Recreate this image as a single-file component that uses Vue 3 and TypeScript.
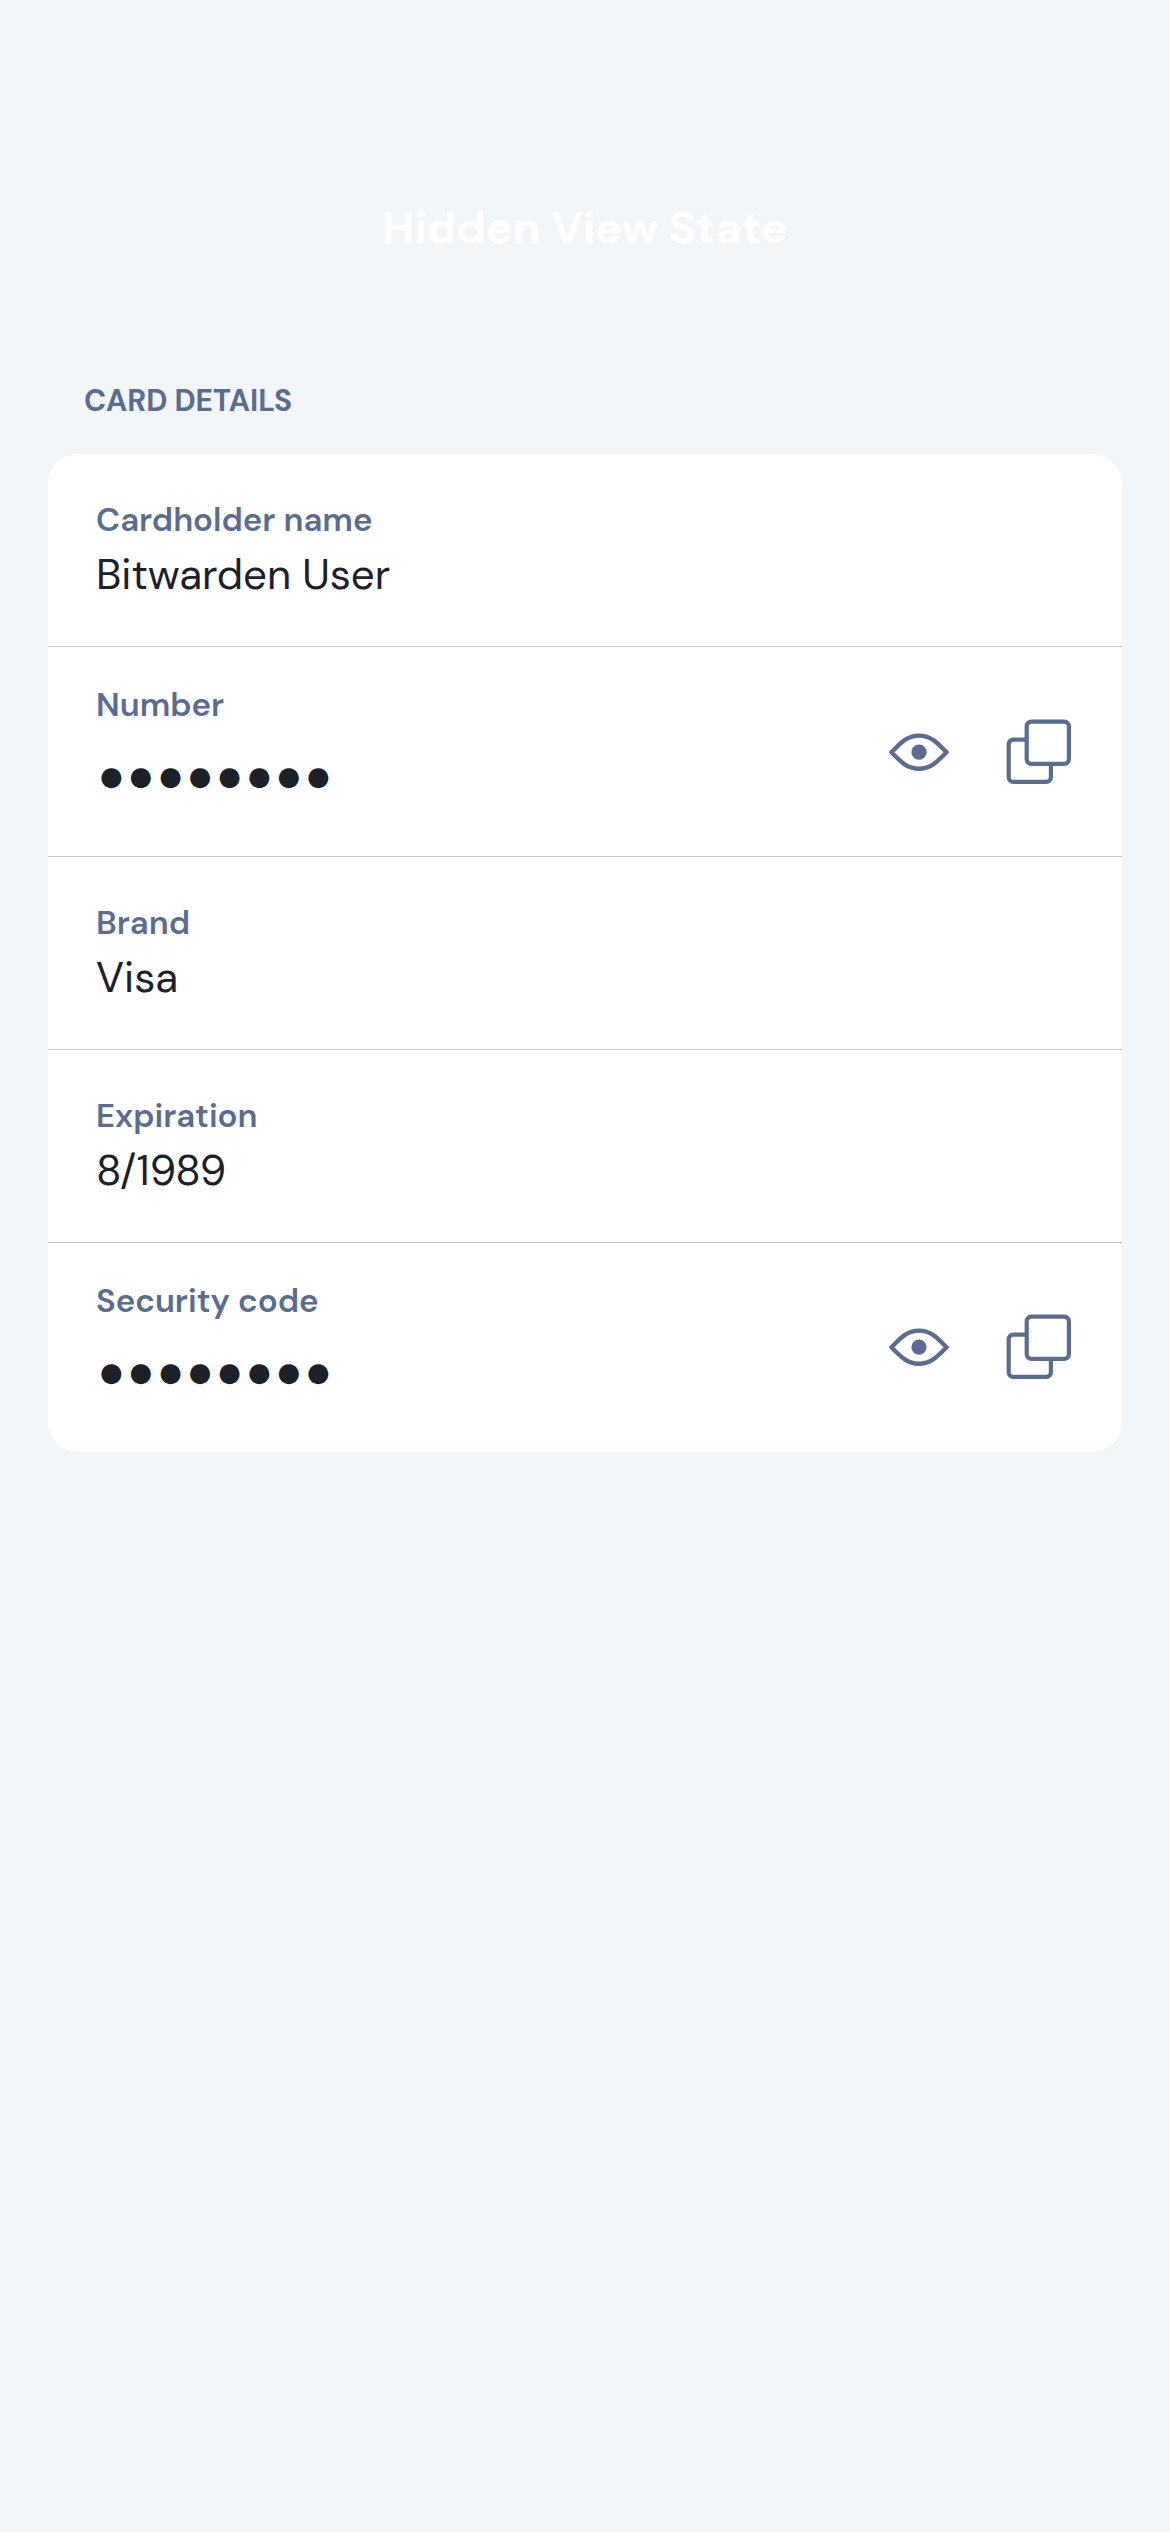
<script setup lang="ts">
interface Field {
  label: string
  value: string
  hidden?: boolean
}

const title = 'Hidden View State'
const fields: Field[] = [
  { label: 'Cardholder name', value: 'Bitwarden User' },
  { label: 'Number', value: '●●●●●●●●', hidden: true },
  { label: 'Brand', value: 'Visa' },
  { label: 'Expiration', value: '8/1989' },
  { label: 'Security code', value: '●●●●●●●●', hidden: true },
]
</script>

<template>
  <main class="screen">
    <h1 class="title">{{ title }}</h1>
    <h2 class="section">CARD DETAILS</h2>
    <section class="card">
      <div v-for="f in fields" :key="f.label" class="row" :class="{ secret: f.hidden }">
        <div class="text">
          <div class="label">{{ f.label }}</div>
          <div class="value">{{ f.value }}</div>
        </div>
        <div v-if="f.hidden" class="actions">
          <svg class="eye" width="60" height="38" viewBox="0 0 60 38" aria-label="Show">
            <path
              d="M2.4 19.3C11 10.9 17.5 2.6 30 2.6S49 10.9 57.6 19.3C49 27.7 42.5 35.7 30 35.7S11 27.7 2.4 19.3Z"
              fill="none"
              stroke="currentColor"
              stroke-width="4.4"
              stroke-linejoin="round"
            />
            <circle cx="30" cy="19.2" r="7.6" fill="currentColor" />
          </svg>
          <svg class="copy" width="66" height="66" viewBox="0 0 66 66" aria-label="Copy">
            <g fill="none" stroke="currentColor" stroke-width="4.2">
              <path d="M20.5 20.6H7.3a4.6 4.6 0 0 0-4.6 4.6v33a4.6 4.6 0 0 0 4.6 4.6h33a4.6 4.6 0 0 0 4.6-4.6V45" />
              <rect x="20.7" y="2.6" width="42.2" height="42.2" rx="4.7" />
            </g>
          </svg>
        </div>
      </div>
    </section>
  </main>
</template>

<style>
body {
  background: #f2f6f9;
}
</style>

<style scoped>
.screen {
  box-sizing: border-box;
  width: 1170px;
  min-height: 2532px;
  padding: 198px 48px 0;
  background: #f2f6f9;
  font-family: "DM Sans", "Inter", sans-serif;
}
.title {
  margin: 0;
  font-size: 45px;
  line-height: 59px;
  font-weight: 700;
  text-align: center;
  color: #fff;
}
.section {
  margin: 124px 0 34px;
  padding-left: 36px;
  font-size: 30px;
  line-height: 39px;
  font-weight: 700;
  color: #5a6d91;
}
.card {
  background: #fff;
  border-radius: 30px;
  overflow: hidden;
}
.row {
  box-sizing: border-box;
  display: flex;
  justify-content: space-between;
  height: 193px;
  padding: 44px 50px 0 48px;
  border-bottom: 1px solid #c5c5c7;
}
.row.secret {
  height: 210px;
  padding-top: 36px;
}
.row.secret:last-child {
  height: 209px;
  border-bottom: 0;
}
.label {
  font-size: 33px;
  line-height: 43px;
  font-weight: 600;
  color: #5a6d91;
}
.value {
  margin-top: 6px;
  font-size: 42px;
  line-height: 55px;
  color: #1b2029;
}
.secret .value {
  margin: 35px 0 0 4px;
  font-family: "DejaVu Sans", sans-serif;
  font-size: 26px;
  line-height: 30px;
  letter-spacing: 6.9px;
}
.actions {
  display: flex;
  align-items: center;
  gap: 57px;
  height: 66px;
  margin-top: 36px;
  color: #5a6d91;
}
.row:last-child .actions {
  margin-top: 35px;
}
.actions svg {
  display: block;
}
</style>
